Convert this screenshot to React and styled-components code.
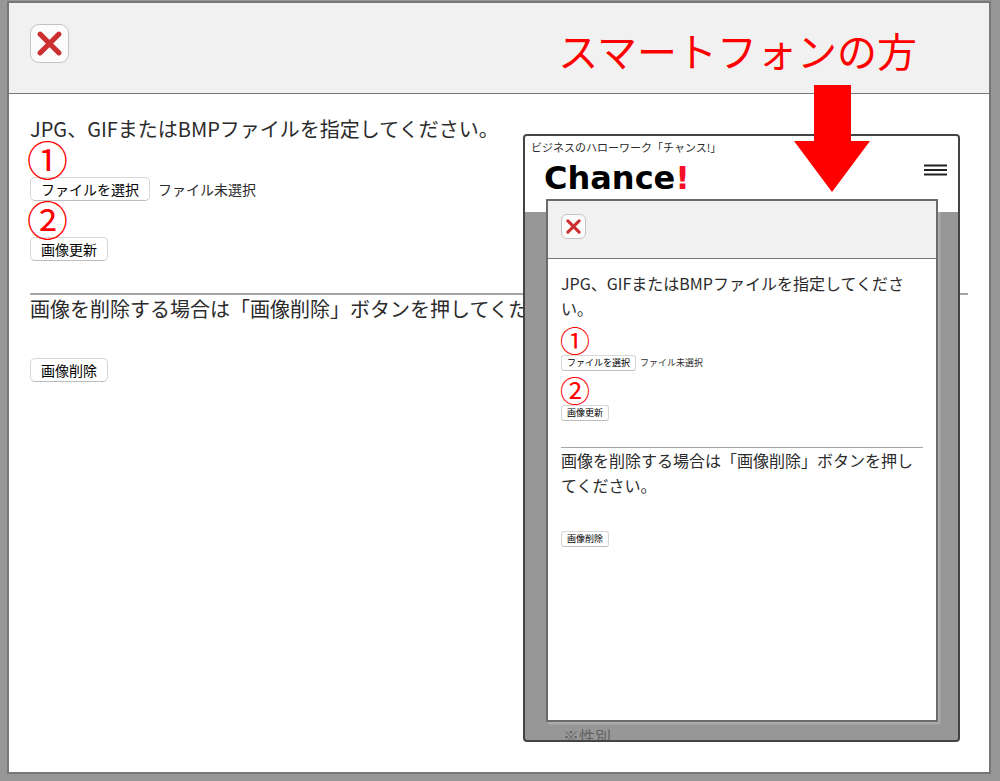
import React, { useRef, useState } from "react";
import styled, { createGlobalStyle } from "styled-components";

function CloseIcon({ size }) {
  return (
    <svg width={size} height={size} viewBox="0 0 24 24" aria-hidden="true">
      <path d="M3 3 L21 21 M21 3 L3 21" fill="none" stroke="#cb2f30" strokeWidth="4.8" strokeLinecap="round" />
    </svg>
  );
}

function ImageForm({ compact }) {
  const inputRef = useRef(null);
  const [fileName, setFileName] = useState("");

  const handleChange = (e) => {
    const file = e.target.files[0];
    setFileName(file ? file.name : "");
  };

  return (
    <Form $compact={compact} onSubmit={(e) => e.preventDefault()}>
      <Message $compact={compact}>JPG、GIFまたはBMPファイルを指定してください。</Message>
      <Step $compact={compact}>①</Step>
      <FileRow $compact={compact}>
        <FormButton type="button" $compact={compact} onClick={() => inputRef.current.click()}>
          ファイルを選択
        </FormButton>
        <span>{fileName || "ファイル未選択"}</span>
        <input ref={inputRef} type="file" accept=".jpg,.gif,.bmp" aria-label="ファイル" hidden onChange={handleChange} />
      </FileRow>
      <Step $compact={compact}>②</Step>
      <FormButton type="submit" $compact={compact}>画像更新</FormButton>
      <Divider $compact={compact} />
      <Message $compact={compact}>画像を削除する場合は「画像削除」ボタンを押してください。</Message>
      <DeleteRow $compact={compact}>
        <FormButton type="button" $compact={compact}>画像削除</FormButton>
      </DeleteRow>
    </Form>
  );
}

function Phone() {
  return (
    <PhoneFrame>
      <PhoneTop>
        <Tagline>ビジネスのハローワーク「チャンス!」</Tagline>
        <PhoneBar>
          <Logo>
            Chance<em>!</em>
          </Logo>
          <MenuButton type="button" aria-label="メニュー">
            <svg width="24" height="12" viewBox="0 0 24 12">
              <path d="M0 1.5 H23 M0 6 H23 M0 10.5 H23" stroke="#222" strokeWidth="1.8" />
            </svg>
          </MenuButton>
        </PhoneBar>
      </PhoneTop>
      <PhoneModal>
        <ModalHeader $compact>
          <CloseButton type="button" aria-label="閉じる" $compact>
            <CloseIcon size={15} />
          </CloseButton>
        </ModalHeader>
        <ImageForm compact />
      </PhoneModal>
      <Behind>※性別</Behind>
    </PhoneFrame>
  );
}

function App() {
  return (
    <Page>
      <GlobalStyle />
      <Modal>
        <ModalHeader>
          <CloseButton type="button" aria-label="閉じる">
            <CloseIcon size={25} />
          </CloseButton>
          <Title>スマートフォンの方</Title>
        </ModalHeader>
        <ImageForm />
        <Phone />
        <Arrow viewBox="0 0 76 107" aria-hidden="true">
          <path d="M20 0 H57 V56 H76 L38 107 L0 56 H20 Z" fill="#ff0000" />
        </Arrow>
      </Modal>
    </Page>
  );
}

export default App;


const GlobalStyle = createGlobalStyle`
  * {
    box-sizing: border-box;
  }

  body {
    margin: 0;
    background: #979797;
    color: #2b2b2b;
    font-family: "Noto Sans CJK JP", sans-serif;
  }

  button {
    font-family: inherit;
  }
`;

const Page = styled.div`
  display: flex;
  min-height: 100vh;
  padding: 1px 9px 7px 7px;
`;

const Modal = styled.main`
  position: relative;
  flex: 1;
  background: #fff;
  border: 2px solid #777;
`;

const ModalHeader = styled.header`
  display: flex;
  align-items: flex-start;
  justify-content: space-between;
  height: ${(p) => (p.$compact ? "58px" : "91px")};
  padding: ${(p) => (p.$compact ? "13px" : "21px")};
  background: #f1f1f1;
  border-bottom: 1px solid #777;
`;

const CloseButton = styled.button`
  display: flex;
  align-items: center;
  justify-content: center;
  width: ${(p) => (p.$compact ? "25px" : "39px")};
  height: ${(p) => (p.$compact ? "25px" : "39px")};
  padding: 0;
  background: #fcfcfc;
  border: 1px solid #c4c4c4;
  border-radius: ${(p) => (p.$compact ? "6px" : "9px")};
  cursor: pointer;
`;

const Title = styled.h1`
  margin: 0 51px 0 0;
  color: #ff0000;
  font-size: 40px;
  font-weight: 400;
  line-height: 53px;
`;

const Form = styled.form`
  padding: ${(p) => (p.$compact ? "12px 13px" : "23px 21px")};
`;

const Message = styled.p`
  margin: 0;
  font-size: ${(p) => (p.$compact ? "16px" : "20px")};
  line-height: ${(p) => (p.$compact ? "25px" : "24px")};
`;

/* red step number, its circle runs over the top edge of the control below */
const Step = styled.div`
  position: relative;
  height: ${(p) => (p.$compact ? "34px" : "36px")};
  padding-top: ${(p) => (p.$compact ? "4px" : "0")};
  margin-left: ${(p) => (p.$compact ? "-1px" : "-3px")};
  color: #ff0000;
  font-size: ${(p) => (p.$compact ? "30px" : "41px")};
  line-height: ${(p) => (p.$compact ? "28px" : "34px")};
  pointer-events: none;
`;

const FileRow = styled.div`
  display: flex;
  align-items: center;
  gap: ${(p) => (p.$compact ? "4px" : "8px")};
  font-size: ${(p) => (p.$compact ? "9px" : "14px")};
  line-height: ${(p) => (p.$compact ? "14px" : "22px")};
`;

const FormButton = styled.button`
  display: block;
  height: ${(p) => (p.$compact ? "16px" : "24px")};
  padding: ${(p) => (p.$compact ? "0 5px" : "0 10px")};
  background: #fff;
  border: 1px solid #d6d6d6;
  border-bottom-color: #bdbdbd;
  border-radius: ${(p) => (p.$compact ? "3px" : "5px")};
  color: #000;
  font-size: ${(p) => (p.$compact ? "9px" : "14px")};
  line-height: ${(p) => (p.$compact ? "14px" : "22px")};
  cursor: pointer;
`;

const Divider = styled.hr`
  height: ${(p) => (p.$compact ? "1px" : "2px")};
  margin: ${(p) => (p.$compact ? "26px 0 0" : "32px 0 2px")};
  background: #a3a6a3;
  border: 0;
`;

const DeleteRow = styled.div`
  margin-top: ${(p) => (p.$compact ? "33px" : "37px")};
`;

/* phone preview laid over the desktop dialog */
const PhoneFrame = styled.section`
  position: absolute;
  top: 131px;
  right: 29px;
  width: 437px;
  height: 608px;
  overflow: hidden;
  background: #979797;
  border: 2px solid #444;
  border-radius: 4px;
`;

const PhoneTop = styled.div`
  height: 76px;
  padding: 3px 10px 0 6px;
  background: #fff;
`;

const Tagline = styled.p`
  margin: 0;
  font-size: 11px;
  line-height: 16px;
`;

const PhoneBar = styled.div`
  display: flex;
  align-items: center;
  justify-content: space-between;
  padding-left: 13px;
`;

const Logo = styled.div`
  color: #000;
  font-family: "DejaVu Sans", sans-serif;
  font-size: 32px;
  font-weight: 700;
  line-height: 46px;

  em {
    color: #f5102a;
    font-style: normal;
  }
`;

const MenuButton = styled.button`
  display: flex;
  padding: 0 0 16px;
  background: none;
  border: 0;
  cursor: pointer;
`;

const PhoneModal = styled.div`
  height: 523px;
  margin: -13px 20px 0 21px;
  background: #fff;
  border: 2px solid #6b6b6b;
  box-shadow: 2px 2px 2px rgba(255, 255, 255, 0.25);
`;

const Behind = styled.p`
  margin: 2px 0 0 38px;
  color: #626262;
  font-size: 16px;
  line-height: 24px;
`;

const Arrow = styled.svg`
  position: absolute;
  top: 82px;
  right: 119px;
  width: 76px;
  height: 107px;
`;
